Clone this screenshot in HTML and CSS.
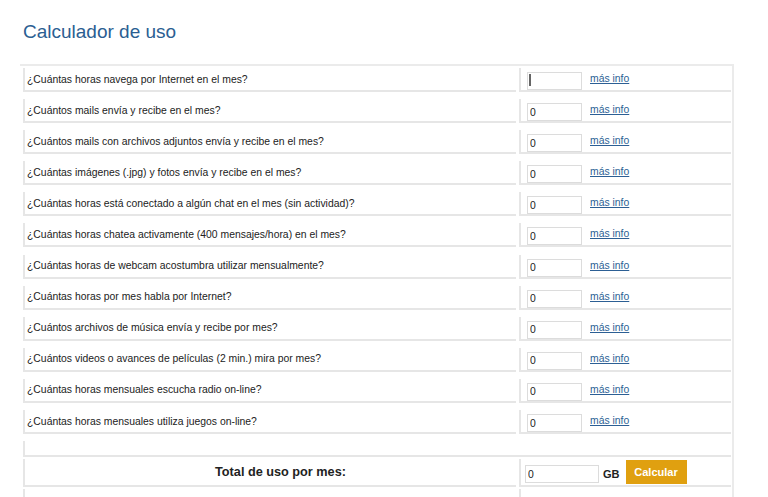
FILE: index.html
```html
<!DOCTYPE html>
<html lang="es">
<head>
    <meta charset="UTF-8">
    <title>Calculador de uso</title>
    <link rel="stylesheet" href="styles.css">
</head>
<body>
    <div class="page">
        <h1 class="titulo">Calculador de uso</h1>
        <div class="calc">
            <div class="fila">
                <div class="preg">¿Cuántas horas navega por Internet en el mes?</div>
                <div class="resp"><input type="text" class="campo cursor" value=""><a href="#">más info</a></div>
            </div>
            <div class="fila">
                <div class="preg">¿Cuántos mails envía y recibe en el mes?</div>
                <div class="resp"><input type="text" class="campo" value="0"><a href="#">más info</a></div>
            </div>
            <div class="fila">
                <div class="preg">¿Cuántos mails con archivos adjuntos envía y recibe en el mes?</div>
                <div class="resp"><input type="text" class="campo" value="0"><a href="#">más info</a></div>
            </div>
            <div class="fila">
                <div class="preg">¿Cuántas imágenes (.jpg) y fotos envía y recibe en el mes?</div>
                <div class="resp"><input type="text" class="campo" value="0"><a href="#">más info</a></div>
            </div>
            <div class="fila">
                <div class="preg">¿Cuántas horas está conectado a algún chat en el mes (sin actividad)?</div>
                <div class="resp"><input type="text" class="campo" value="0"><a href="#">más info</a></div>
            </div>
            <div class="fila">
                <div class="preg">¿Cuántas horas chatea activamente (400 mensajes/hora) en el mes?</div>
                <div class="resp"><input type="text" class="campo" value="0"><a href="#">más info</a></div>
            </div>
            <div class="fila">
                <div class="preg">¿Cuántas horas de webcam acostumbra utilizar mensualmente?</div>
                <div class="resp"><input type="text" class="campo" value="0"><a href="#">más info</a></div>
            </div>
            <div class="fila">
                <div class="preg">¿Cuántas horas por mes habla por Internet?</div>
                <div class="resp"><input type="text" class="campo" value="0"><a href="#">más info</a></div>
            </div>
            <div class="fila">
                <div class="preg">¿Cuántos archivos de música envía y recibe por mes?</div>
                <div class="resp"><input type="text" class="campo" value="0"><a href="#">más info</a></div>
            </div>
            <div class="fila">
                <div class="preg">¿Cuántos videos o avances de películas (2 min.) mira por mes?</div>
                <div class="resp"><input type="text" class="campo" value="0"><a href="#">más info</a></div>
            </div>
            <div class="fila">
                <div class="preg">¿Cuántas horas mensuales escucha radio on-line?</div>
                <div class="resp"><input type="text" class="campo" value="0"><a href="#">más info</a></div>
            </div>
            <div class="fila">
                <div class="preg">¿Cuántas horas mensuales utiliza juegos on-line?</div>
                <div class="resp"><input type="text" class="campo" value="0"><a href="#">más info</a></div>
            </div>
            <div class="fila vacia">
                <div class="preg todo"></div>
            </div>
            <div class="fila total">
                <div class="preg">Total de uso por mes:</div>
                <div class="resp"><input type="text" class="campo ancho" value="0"><b class="gb">GB</b><button class="btn">Calcular</button></div>
            </div>
            <div class="fila ultima">
                <div class="preg"></div>
                <div class="resp"></div>
            </div>
        </div>
    </div>
</body>
</html>
```

FILE: styles.css
```css
body{
    margin: 0;
    font-family: "Liberation Sans", Arial, sans-serif;
    background: #fff;
    color: #222;
}
.page{
    padding-left: 20px;
}
.titulo{
    margin: 0 0 0 3px;
    padding-top: 21px;
    height: 43px;
    line-height: 22px;
    font-size: 19px;
    font-weight: normal;
    color: #2b5e92;
}
.calc{
    width: 714px;
    box-sizing: border-box;
    border-top: 2px solid #ebebeb;
    border-right: 2px solid #ebebeb;
    padding: 2px 1px 0 3px;
}
.fila{
    display: flex;
    gap: 3px;
    margin-bottom: 7.1px;
}
.preg, .resp{
    box-sizing: border-box;
    height: 24px;
    border-left: 2px solid #e6e6e6;
    border-bottom: 2px solid #e6e6e6;
    display: flex;
    align-items: center;
    font-size: 10.4px;
}
.preg{
    width: 493px;
    padding-left: 2px;
}
.resp{
    flex: 1;
    padding-left: 6px;
    align-items: flex-end;
}
.todo{
    width: 100%;
}
.campo{
    box-sizing: border-box;
    width: 55px;
    height: 18px;
    margin: 0;
    border: 1px solid #dcdcdc;
    padding: 0 2px;
    font-family: "Liberation Sans", Arial, sans-serif;
    font-size: 10.4px;
    color: #222;
    outline: none;
}
.cursor{
    background: linear-gradient(#666, #666) no-repeat 1px 1px / 2px 12px;
}
.resp a{
    color: #2c5f94;
    margin-left: 8px;
    align-self: center;
    margin-bottom: 1px;
}
.vacia{
    margin-bottom: 2px;
}
.vacia .preg{
    height: 16px;
}
.total{
    margin-bottom: 2px;
}
.total .preg, .total .resp{
    height: 28px;
}
.total .preg{
    justify-content: center;
    padding-left: 20px;
    font-weight: bold;
    font-size: 12.7px;
}
.total .resp{
    padding-left: 4px;
    padding-bottom: 2px;
}
.ancho{
    width: 74px;
}
.gb{
    font-size: 11px;
    line-height: 18px;
    margin-left: 4px;
}
.btn{
    box-sizing: border-box;
    width: 61px;
    height: 24px;
    margin-left: 6px;
    align-self: flex-start;
    margin-top: 1px;
    background: #e0a010;
    color: #fff;
    border: none;
    font-family: "Liberation Sans", Arial, sans-serif;
    font-weight: bold;
    font-size: 11px;
    padding: 0;
}
.ultima .preg, .ultima .resp{
    height: 30px;
}
```
